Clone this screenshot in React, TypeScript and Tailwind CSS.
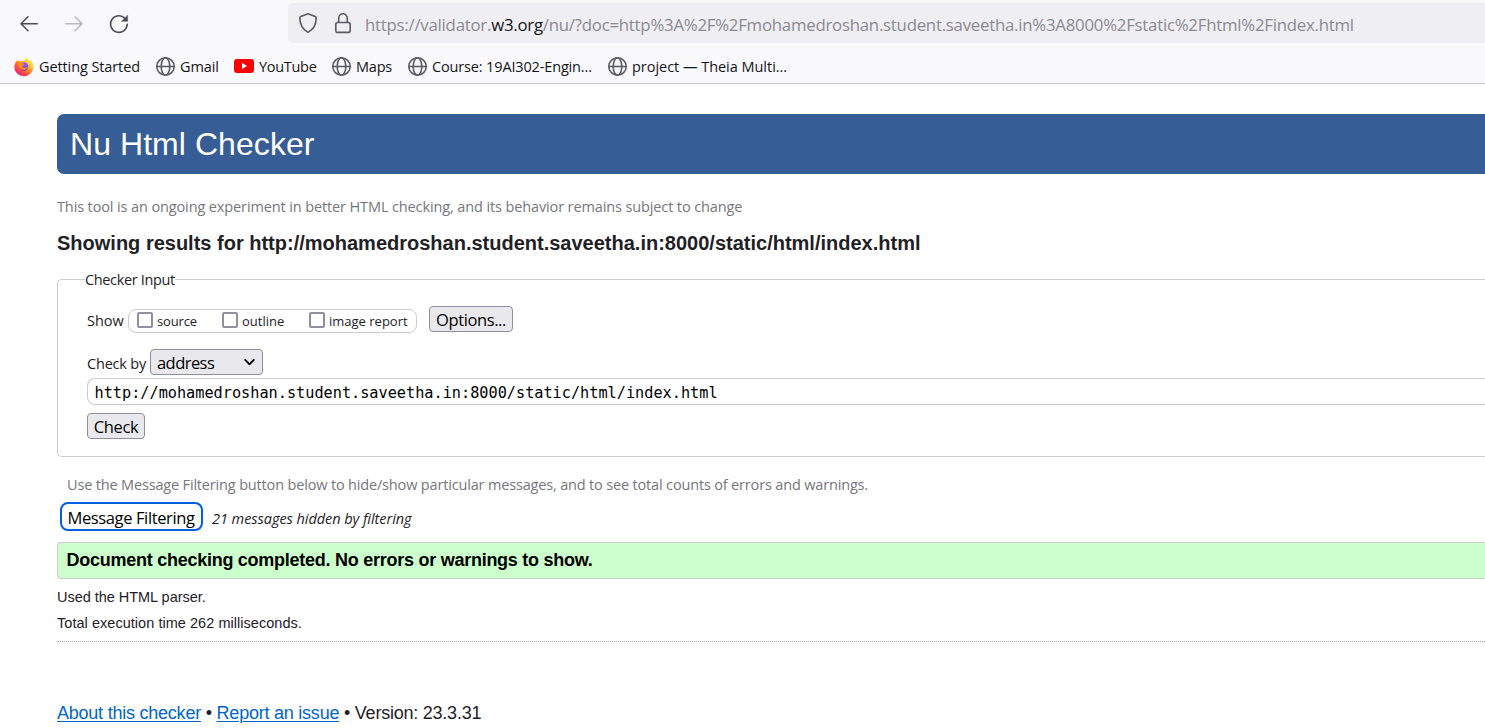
import type { ReactNode } from 'react';

const SEGOE = "font-['Open_Sans','Noto_Sans',sans-serif]";
const ARIAL = "font-['Liberation_Sans',Arial,sans-serif]";

function Globe() {
  return (
    <svg width="20" height="20" viewBox="0 0 20 20" fill="none" stroke="#5b5b66" strokeWidth="1.6" className="shrink-0">
      <circle cx="9.500" cy="9.500" r="8.700" />
      <ellipse cx="9.500" cy="9.500" rx="4.300" ry="8.700" />
      <path d="M0.800 9.500h17.400" />
    </svg>
  );
}

function Firefox() {
  return (
    <svg width="20" height="20" viewBox="0 0 20 20" className="shrink-0">
      <defs>
        <linearGradient id="flame" x1="0.85" y1="0.1" x2="0.2" y2="0.95">
          <stop offset="0" stopColor="#fff44f" />
          <stop offset="0.3" stopColor="#ffc02e" />
          <stop offset="0.6" stopColor="#ff6a2b" />
          <stop offset="1" stopColor="#f0127c" />
        </linearGradient>
        <linearGradient id="core" x1="0.7" y1="0" x2="0.3" y2="1">
          <stop offset="0" stopColor="#9059ff" />
          <stop offset="1" stopColor="#5b3bd6" />
        </linearGradient>
      </defs>
      <path d="M12.6 0c.4 1.8 2 2.700 3.200 3.900l.3-1c2.200 2 3.300 4.700 3.300 7.200a9.500 9.100 0 0 1-19 .1c0-2.700.9-4.900 2.100-6.300L2.800 4.700l1-2 .9 1.500c.9-.3 2-.3 2.900 0L9 4c1.800-.8 3.100-2 3.600-4z" fill="url(#flame)" />
      <circle cx="10" cy="9.500" r="4.200" fill="url(#core)" />
      <path d="M4.200 5.400c2.200-.5 4.100 0 5.400 1.300l1.300.3c-.2.900-1.100 1-2.100 1.500-.6.300-.4 1.700.9 2.100 1.500.4 2.500-.6 3.800-.1-1 2.300-3.500 2.900-5.500 2-2.300-1-4.200-3.800-3.800-7.100z" fill="#ff8a22" />
    </svg>
  );
}

function YouTube() {
  return (
    <svg width="20" height="14" viewBox="0 0 20 14" className="-mt-px shrink-0">
      <rect width="20" height="14" rx="3" fill="#f00" />
      <path d="M8 4v6l5.200-3z" fill="#fff" />
    </svg>
  );
}

function Bookmark({ icon, label, className }: { icon: ReactNode; label: string; className: string }) {
  return (
    <div className={`flex shrink-0 items-center whitespace-nowrap ${className}`}>
      {icon}
      <span>{label}</span>
    </div>
  );
}

function Option({ label, className }: { label: string; className: string }) {
  return (
    <label className={`flex shrink-0 items-center whitespace-nowrap ${className}`}>
      <span className="-mt-px h-4 w-4 shrink-0 rounded-[2px] border-2 border-[#8f8f9d] bg-white" />
      <span className="ml-1 mt-0.5">{label}</span>
    </label>
  );
}

const BUTTON =
  'flex h-[26px] shrink-0 items-center justify-center whitespace-nowrap rounded-[4px] border border-[#8f8f9d] bg-[#e9e9ed] pt-0.5 text-[16.5px] tracking-[-0.4px] text-black';

export default function App() {
  return (
    <div className={`h-[728px] w-[1485px] overflow-hidden bg-white text-[#1f2126] ${SEGOE}`}>
      <header className="h-[84px] border-b border-[#c8c8cd] bg-[#f9f9fb]">
        <div className="flex h-[46px] items-start pt-[3px]">
          <div className="flex h-10 w-[288px] items-center pl-[18px]">
            <svg width="22" height="20" viewBox="0 0 22 20" fill="none" stroke="#4b4b55" strokeWidth="1.5" strokeLinecap="round" strokeLinejoin="round">
              <path d="M19.300 10.700H3M10 3.700l-7 7 7 7" />
            </svg>
            <svg width="22" height="20" viewBox="0 0 22 20" fill="none" stroke="#b8b8be" strokeWidth="1.5" strokeLinecap="round" strokeLinejoin="round" className="ml-6">
              <path d="M1.700 10.700H18M11 3.700l7 7-7 7" />
            </svg>
            <svg width="22" height="22" viewBox="0 0 22 22" fill="none" stroke="#4b4b55" strokeWidth="1.6" strokeLinecap="round" className="ml-[22px]">
              <path d="M19.200 12.300A8.300 8.300 0 1 1 17 6.400" />
              <path d="M19.600 3.400v5.900h-5.900z" fill="#4b4b55" stroke="#4b4b55" strokeWidth="0.5" strokeLinejoin="round" />
            </svg>
          </div>
          <div className="flex h-10 flex-1 items-center rounded-l-[5px] bg-[#efeef3] pl-2.5">
            <svg width="20" height="22" viewBox="0 0 20 22" fill="none" stroke="#5b5b66" strokeWidth="1.6" strokeLinejoin="round">
              <path d="M10 1.700l7.200 2.900c.8.300 1 .7 1 1.400C18.200 12.200 15 17.700 10 20.400 5 17.700 1.900 12.200 1.800 6c0-.7.200-1.100 1-1.400z" />
            </svg>
            <svg width="18" height="22" viewBox="0 0 18 22" fill="none" stroke="#5b5b66" strokeWidth="1.6" className="ml-4">
              <rect x="1.800" y="10.500" width="14.400" height="9.900" rx="2" />
              <path d="M4.700 10.200V6a4.300 4.300 0 0 1 8.600 0v4.200" />
            </svg>
            <div className="ml-[13px] mt-1 whitespace-nowrap text-[16.8px] tracking-[-0.235px] text-[#8b8a91]">
              https://validator.<span className="text-[#15141a]">w3.org</span>
              /nu/?doc=http%3A%2F%2Fmohamedroshan.student.saveetha.in%3A8000%2Fstatic%2Fhtml%2Findex.html
            </div>
          </div>
        </div>
        <div className="flex h-[37px] items-center pb-px pl-[14px] pt-[5px] text-[14.5px] text-[#15141a]">
          <Bookmark icon={<Firefox />} label="Getting Started" className="w-[142px] gap-[5px] tracking-[-0.1px]" />
          <Bookmark icon={<Globe />} label="Gmail" className="w-[78px] gap-1 tracking-[-0.1px]" />
          <Bookmark icon={<YouTube />} label="YouTube" className="w-[98px] gap-[5px] tracking-[-0.3px]" />
          <Bookmark icon={<Globe />} label="Maps" className="w-[76px] gap-1 tracking-[-0.2px]" />
          <Bookmark icon={<Globe />} label="Course: 19AI302-Engin..." className="w-[200px] gap-1 tracking-[-0.15px]" />
          <Bookmark icon={<Globe />} label="project — Theia Multi..." className="gap-1 tracking-[-0.03px]" />
        </div>
      </header>

      <main className="pl-[57px] pt-[30px]">
        <h1 className={`flex h-[60px] items-center rounded-l-[7px] bg-[#365d95] pl-[13px] text-[32px] text-white ${ARIAL}`}>
          <span className="tracking-[0.06px]">Nu Html Checker</span>
        </h1>
        <p className="mt-[22px] h-[22px] whitespace-nowrap text-[14.5px] leading-[22px] tracking-[-0.12px] text-[#76767b]">
          This tool is an ongoing experiment in better HTML checking, and its behavior remains subject to change
        </p>
        <h2 className={`mt-[13px] h-6 whitespace-nowrap text-[20px] font-bold leading-6 ${ARIAL}`}>
          Showing results for http://mohamedroshan.student.saveetha.in:8000/static/html/index.html
        </h2>

        <fieldset className="mt-[14px] h-[188px] rounded-l-[5px] border border-r-0 border-[#ccc] pl-[29px]">
          <legend className="-ml-[2px] h-5 whitespace-nowrap text-[14.5px] leading-[22px] tracking-[-0.35px]">Checker Input</legend>
          <div className="mt-[17px] flex h-[26px] items-center">
            <span className="mt-[3px] w-[41px] text-[14.5px]">Show</span>
            <div className="mt-[4px] flex h-6 w-[289px] items-center rounded-[8px] border border-[#ccc] pl-2 text-[13px]">
              <Option label="source" className="-mt-px w-[85px] tracking-[-0.15px]" />
              <Option label="outline" className="-mt-px w-[87px]" />
              <Option label="image report" className="-mt-px" />
            </div>
            <button className={`ml-3 w-[84px] ${BUTTON}`}>Options...</button>
          </div>
          <div className="mt-[17px] flex h-[26px] items-center">
            <span className="mt-[3px] w-[63px] whitespace-nowrap text-[14.5px] tracking-[-0.2px]">Check by</span>
            <div className="flex h-[26px] w-[113px] items-center justify-between rounded-[4px] border border-[#8f8f9d] bg-[#e9e9ed] pl-[6px] pr-[7px] text-[16.5px] tracking-[-0.55px] text-black">
              <span className="mt-0.5">address</span>
              <svg width="11" height="8" viewBox="0 0 11 8" fill="none" stroke="#000" strokeWidth="1.8" strokeLinecap="round" strokeLinejoin="round">
                <path d="M1.200 1.800l4.300 4.500 4.300-4.500" />
              </svg>
            </div>
          </div>
          <div className="mt-[3px] flex h-[27px] items-center whitespace-nowrap rounded-l-[8px] border border-r-0 border-[#ccc] pl-[6.5px] pt-[3px] font-['DejaVu_Sans_Mono',monospace] text-[15.23px] text-black">
            http://mohamedroshan.student.saveetha.in:8000/static/html/index.html
          </div>
          <button className={`mt-2 w-[58px] ${BUTTON}`}>Check</button>
        </fieldset>

        <p className="mt-[17px] h-[22px] whitespace-nowrap pl-[10px] text-[14.5px] leading-[22px] tracking-[-0.165px] text-[#76767b]">
          Use the Message Filtering button below to hide/show particular messages, and to see total counts of errors and warnings.
        </p>
        <div className="mt-[6px] flex h-[29px] items-center pl-[3px]">
          <button className="flex h-[29px] w-[143px] items-center justify-center whitespace-nowrap rounded-[8px] border-2 border-[#0060df] pr-px pt-1 text-[16.5px] tracking-[-0.38px] text-black">
            Message Filtering
          </button>
          <em className="ml-[9px] mt-1 whitespace-nowrap text-[14.5px] tracking-[-0.05px]">21 messages hidden by filtering</em>
        </div>
        <div className={`mt-[11px] flex h-[37px] items-center rounded-l-[4px] border border-r-0 border-[#ccc] bg-[#cfc] pl-[8.5px] text-[18px] font-bold text-black ${ARIAL}`}>
          <span className="tracking-[-0.26px]">Document checking completed. No errors or warnings to show.</span>
        </div>
        <p className={`mt-[7px] h-[22px] text-[14.5px] leading-[22px] tracking-[-0.03px] ${ARIAL}`}>Used the HTML parser.</p>
        <p className={`mt-1 h-[22px] text-[14.5px] leading-[22px] tracking-[0.04px] ${ARIAL}`}>Total execution time 262 milliseconds.</p>
        <footer className={`mt-[7px] border-t border-dotted border-[#aaa] pt-[59px] text-[18px] leading-6 tracking-[-0.23px] ${ARIAL}`}>
          <a className="text-[#0066cc] underline decoration-1 underline-offset-2">About this checker</a>
          {' • '}
          <a className="text-[#0066cc] underline decoration-1 underline-offset-2">Report an issue</a>
          {' • Version: 23.3.31'}
        </footer>
      </main>
    </div>
  );
}
